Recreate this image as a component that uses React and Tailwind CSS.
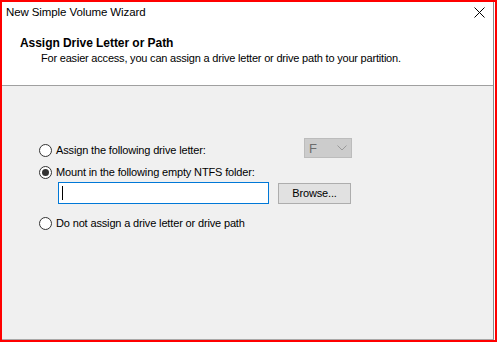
export default function App() {
  const Radio = ({ checked }) => (
    <span className="w-[13px] h-[13px] rounded-full border border-[#333333] bg-white flex items-center justify-center shrink-0">
      {checked && <span className="w-[7px] h-[7px] rounded-full bg-[#333333]" />}
    </span>
  );
  return (
    <div className="w-[497px] h-[342px] bg-[#ff0000] p-[2px] font-['Liberation_Sans',Arial,sans-serif] text-[11px] tracking-[-0.15px] text-black overflow-hidden">
      <div className="w-full h-full flex bg-white">
        <div className="flex-1 flex flex-col bg-[#f0f0f0] border-r border-r-[#8a8a8a] border-b border-b-[#a8a8a8]">
          <div className="h-[84px] bg-white border-b border-[#a0a0a0] flex flex-col">
            <div className="flex items-start justify-between pl-[4px] pr-[8px] pt-[2px]">
              <span className="text-[11.5px] leading-[16px] tracking-[-0.1px]">New Simple Volume Wizard</span>
              <svg width="11" height="11" viewBox="0 0 11 11" className="mt-[3px]">
                <path d="M0.5 0.5 L10.5 10.5 M10.5 0.5 L0.5 10.5" stroke="#000" strokeWidth="1" />
              </svg>
            </div>
            <div className="pl-[18px] mt-[15px] font-bold text-[12px] leading-[16px] tracking-[-0.05px]">Assign Drive Letter or Path</div>
            <div className="pl-[39px] text-[11px] leading-[15px] tracking-[-0.2px]">For easier access, you can assign a drive letter or drive path to your partition.</div>
          </div>
          <div className="flex flex-col pl-[37px] pt-[52px]">
            <div className="flex items-start">
              <div className="w-[265px] h-[20px] mt-[2px] flex items-center">
                <Radio />
                <span className="ml-[4px]">Assign the following drive letter:</span>
              </div>
              <div className="w-[48px] h-[20px] bg-[#cccccc] border border-[#bcbcbc] flex items-center justify-between pl-[4px] pr-[4px] text-[#6d6d6d]">
                <span className="text-[13px] leading-none">F</span>
                <svg width="10" height="6" viewBox="0 0 10 6"><path d="M0.5 0.5 L5 5 L9.5 0.5" stroke="#9a9a9a" fill="none" strokeWidth="1" /></svg>
              </div>
            </div>
            <div className="flex items-center h-[20px] mt-[2px]">
              <Radio checked />
              <span className="ml-[4px]">Mount in the following empty NTFS folder:</span>
            </div>
            <div className="flex items-start ml-[19px]">
              <div className="w-[211px] h-[22px] bg-white border border-[#0078d7] flex items-center pl-[3px]">
                <span className="w-px h-[14px] bg-black" />
              </div>
              <button className="ml-[9px] mt-[1px] w-[73px] h-[21px] bg-[#e1e1e1] border border-[#adadad] text-[11px] leading-none">Browse...</button>
            </div>
            <div className="flex items-center h-[20px] mt-[9px]">
              <Radio />
              <span className="ml-[4px]">Do not assign a drive letter or drive path</span>
            </div>
          </div>
        </div>
        <div className="w-[1px]" />
      </div>
    </div>
  );
}
